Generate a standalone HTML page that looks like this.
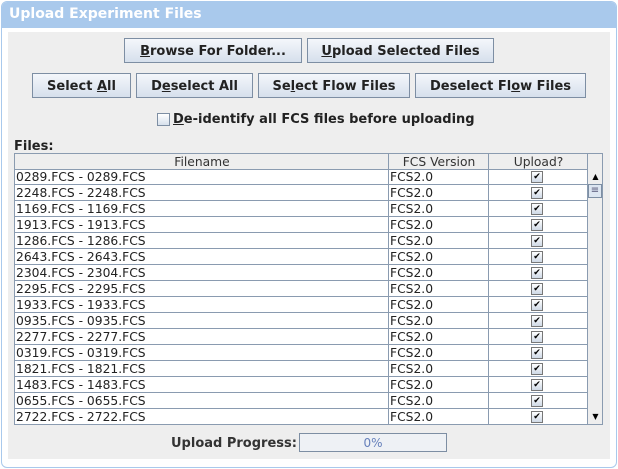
<!DOCTYPE html><html><head><style>
body{margin:0;width:618px;height:469px;background:#fff;font-family:"DejaVu Sans","Liberation Sans",sans-serif;position:relative;overflow:hidden}
.a{position:absolute}
.frame{left:1px;top:1px;width:614px;height:465px;border:1px solid #a9c9ec;border-radius:6px;background:#fff}
.title{left:2px;top:2px;width:614px;height:26px;background:#a9c9ec;border-radius:5px 5px 0 0;color:#fff;font-weight:bold;font-size:14px;line-height:24px;text-indent:7px}
.panel{left:8px;top:32px;width:602px;height:427px;background:#eeeeee}
.btn{border:1px solid #7d8ea3;background:linear-gradient(#f4f7fb,#d6e0ec);font-weight:bold;font-size:13px;color:#222;text-align:center;line-height:26px;box-sizing:border-box;height:25px}
.tbl{left:14px;top:153px;width:589px;height:272px;border:1px solid #8a9bb0;box-sizing:border-box;background:#fff;overflow:hidden}
.row{position:absolute;left:0;height:16px;width:573px;border-bottom:1px solid #8a9bb0;box-sizing:border-box;font-size:12.3px;line-height:17px;color:#222}
.row span{position:absolute;top:0}
.cb{position:absolute;left:516px;top:2px;width:10px;height:10px;border:1px solid #777;background:linear-gradient(#fff,#cfd9e6);font-size:9px;line-height:10px;text-align:center;color:#000}
.v{position:absolute;top:0;width:1px;height:272px;background:#8a9bb0}
</style></head><body>
<div class="a frame"></div>
<div class="a title">Upload Experiment Files</div>
<div class="a panel"></div>
<div class="a btn" style="left:124px;top:38px;width:178px"><u>B</u>rowse For Folder...</div>
<div class="a btn" style="left:307px;top:38px;width:187px"><u>U</u>pload Selected Files</div>
<div class="a btn" style="left:32px;top:73px;width:99px">Select <u>A</u>ll</div>
<div class="a btn" style="left:136px;top:73px;width:117px">D<u>e</u>select All</div>
<div class="a btn" style="left:258px;top:73px;width:152px">Se<u>l</u>ect Flow Files</div>
<div class="a btn" style="left:415px;top:73px;width:171px">Deselect Fl<u>o</u>w Files</div>
<div class="a" style="left:157px;top:113px;width:11px;height:11px;border:1px solid #7d8ea3;background:linear-gradient(#fff,#d6e0ec)"></div>
<div class="a" style="left:173px;top:112px;font-size:13px;font-weight:bold;color:#222"><u>D</u>e-identify all FCS files before uploading</div>
<div class="a" style="left:14px;top:139px;font-size:13px;font-weight:bold;color:#222">Files:</div>
<div class="a tbl">
<div class="row" style="top:0;width:587px;background:#eeeeee;color:#333;text-align:center"><span style="left:0;width:374px">Filename</span><span style="left:374px;width:100px">FCS Version</span><span style="left:474px;width:99px">Upload?</span></div>
<div id="rows"></div>
<div class="v" style="left:373px"></div><div class="v" style="left:473px"></div><div class="v" style="left:572px"></div>
<div class="a" style="left:573px;top:15px;width:15px;height:257px;background:#eeeeee"></div>
<div class="a" style="left:574px;top:16px;width:13px;height:14px;background:#eee;font-size:8px;text-align:center;line-height:14px">▲</div>
<div class="a" style="left:573px;top:30px;width:14px;height:14px;border:1px solid #7d8ea3;box-sizing:border-box;background:#dde6f1;font-size:10px;text-align:center;line-height:12px;color:#557">≡</div>
<div class="a" style="left:574px;top:256px;width:13px;height:14px;font-size:8px;text-align:center;line-height:14px">▼</div>
</div>
<div class="a" style="left:171px;top:436px;font-size:13px;font-weight:bold;color:#333">Upload Progress:</div>
<div class="a" style="left:299px;top:433px;width:148px;height:19px;border:1px solid #7d8ea3;box-sizing:border-box;background:#eef1f5;text-align:center;font-size:12px;line-height:18px;color:#6680bb">0%</div>
<script>
var n=["0289","2248","1169","1913","1286","2643","2304","2295","1933","0935","2277","0319","1821","1483","0655","2722","0111"];
var h="";n.forEach(function(x,i){h+='<div class="row" style="top:'+(15+i*16)+'px"><span style="left:1px">'+x+'.FCS - '+x+'.FCS</span><span style="left:375px">FCS2.0</span><div class="cb">✔</div></div>';});
document.getElementById("rows").innerHTML=h;
</script>
</body></html>
